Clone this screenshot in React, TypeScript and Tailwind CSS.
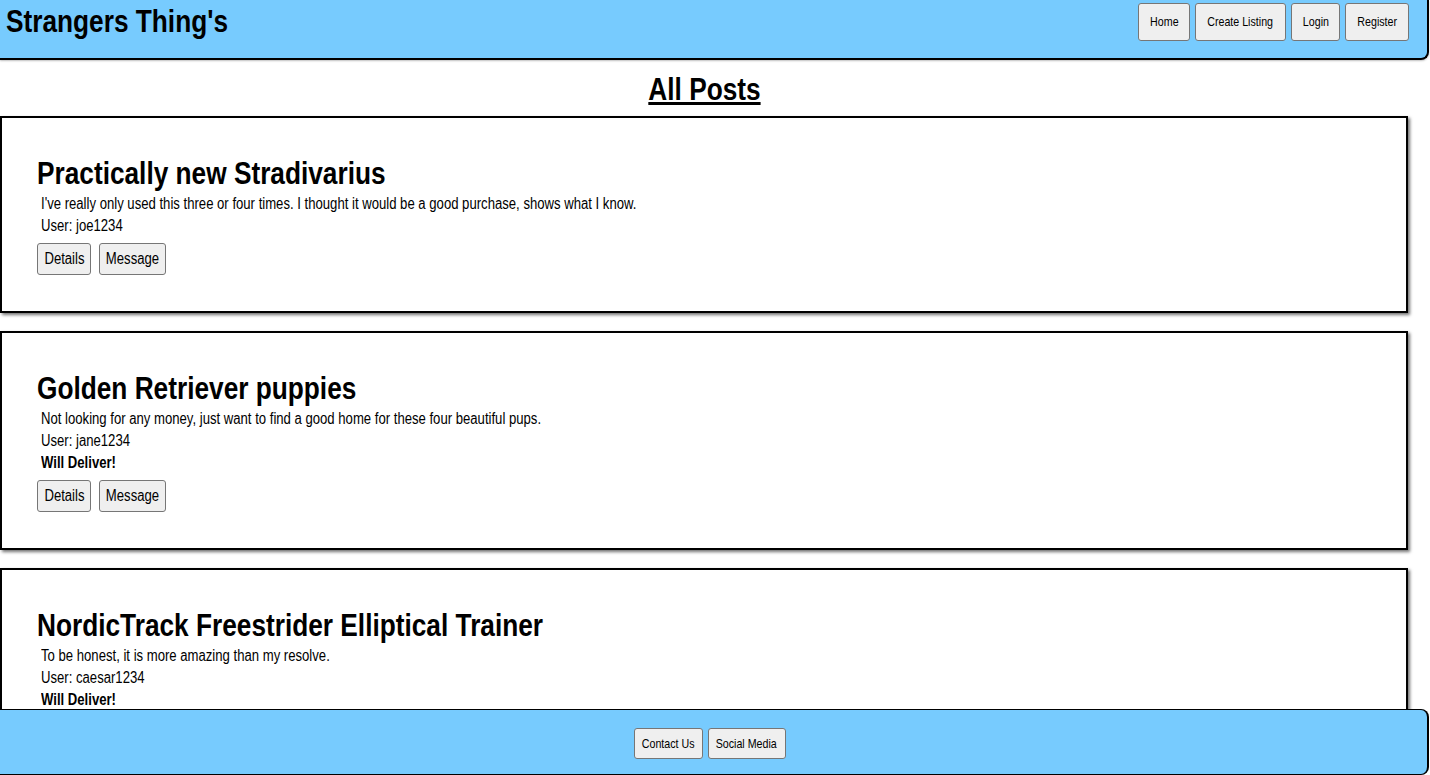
import React from "react";

type Post = {
  title: string;
  description: string;
  user: string;
  willDeliver: boolean;
};

const posts: Post[] = [
  {
    title: "Practically new Stradivarius",
    description:
      "I've really only used this three or four times. I thought it would be a good purchase, shows what I know.",
    user: "joe1234",
    willDeliver: false,
  },
  {
    title: "Golden Retriever puppies",
    description:
      "Not looking for any money, just want to find a good home for these four beautiful pups.",
    user: "jane1234",
    willDeliver: true,
  },
  {
    title: "NordicTrack Freestrider Elliptical Trainer",
    description: "To be honest, it is more amazing than my resolve.",
    user: "caesar1234",
    willDeliver: true,
  },
];

// no Arial Narrow here, so squeeze Liberation Sans horizontally
const font = "font-['Liberation_Sans_Narrow','Arial_Narrow','Liberation_Sans',Arial,sans-serif]";
const narrow = "inline-block whitespace-nowrap scale-x-[0.82]";
const narrowLeft = "block whitespace-nowrap origin-left scale-x-[0.82]";

const btn =
  "flex items-center justify-center bg-[#efefef] border border-[#767676] rounded-[3px] text-black hover:bg-[#e5e5e5]";

const Btn = ({ label, className }: { label: string; className: string }) => (
  <button className={`${btn} ${className}`}>
    <span className={narrow}>{label}</span>
  </button>
);

const PostCard = ({ post }: { post: Post }) => {
  return (
    <div className="w-[1408px] border-2 border-black bg-white px-[35px] pt-[37px] pb-[36px] shadow-[2px_2px_3px_rgba(0,0,0,0.55)]">
      <h2 className={`${narrowLeft} text-[32px] font-bold leading-[37px]`}>{post.title}</h2>
      <div className={`${narrowLeft} mt-[1px] ml-1 text-[16px] leading-[22px]`}>
        {post.description}
      </div>
      <div className={`${narrowLeft} ml-1 text-[16px] leading-[22px]`}>User: {post.user}</div>
      {post.willDeliver && (
        <div className={`${narrowLeft} ml-1 text-[16px] font-bold leading-[22px]`}>
          Will Deliver!
        </div>
      )}
      <div className="mt-[6px] flex gap-2">
        <Btn label="Details" className="h-[32px] w-[54px] text-[16px]" />
        <Btn label="Message" className="h-[32px] w-[67px] text-[16px]" />
      </div>
    </div>
  );
};

export default function App() {
  return (
    <div className={`${font} min-h-screen bg-white pb-[80px] text-black`}>
      <header className="flex h-[60px] w-[1429px] items-start justify-between rounded-br-lg border-r-2 border-b-2 border-black bg-[#77cbfe] pt-[3px] pr-[18px] pl-[6px] shadow-[0_1px_2px_rgba(0,0,0,0.25)]">
        <h1 className={`${narrowLeft} text-[32px] font-bold leading-[37px]`}>Strangers Thing's</h1>
        <nav className="flex gap-[5px]">
          <Btn label="Home" className="h-[38px] w-[52px] text-[13px]" />
          <Btn label="Create Listing" className="h-[38px] w-[91px] text-[13px]" />
          <Btn label="Login" className="h-[38px] w-[49px] text-[13px]" />
          <Btn label="Register" className="h-[38px] w-[64px] text-[13px]" />
        </nav>
      </header>

      <main className="w-[1408px]">
        <h1 className="mt-[11px] mb-[8px] text-center text-[32px] font-bold leading-[37px]">
          <span className={`${narrow} underline`}>All Posts</span>
        </h1>
        <div className="flex flex-col gap-[18px]">
          {posts.map((post) => (
            <PostCard key={post.title} post={post} />
          ))}
        </div>
      </main>

      <footer className="fixed bottom-0 left-0 flex h-[66px] w-[1429px] items-start justify-center rounded-r-lg border-t border-r-2 border-b border-black bg-[#77cbfe] pt-[18px] pr-2">
        <div className="flex gap-[5px]">
          <Btn label="Contact Us" className="h-[31px] w-[69px] text-[13px]" />
          <Btn label="Social Media" className="h-[31px] w-[78px] text-[13px]" />
        </div>
      </footer>
    </div>
  );
}
